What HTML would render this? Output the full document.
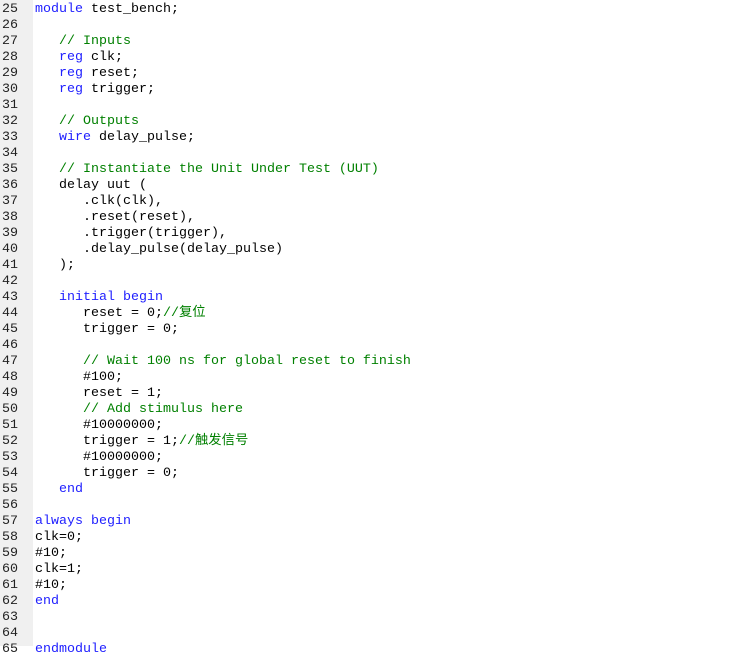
<!DOCTYPE html>
<html><head><meta charset="utf-8"><style>
html,body{margin:0;padding:0;background:#fff;width:735px;height:646px;overflow:hidden}
.g{position:absolute;left:0;top:0;width:33px;height:646px;background:#f0f0f0}
pre{position:absolute;top:2px;margin:0;font-family:"Liberation Mono","Noto Sans CJK SC",monospace;font-size:13.33px;line-height:16px;color:#000}
.n{left:2px;color:#222}
.c{left:35px}
.k{color:#2020ff}.m{color:#008000}
</style></head><body>
<div class="g"></div>
<pre class="n">25
26
27
28
29
30
31
32
33
34
35
36
37
38
39
40
41
42
43
44
45
46
47
48
49
50
51
52
53
54
55
56
57
58
59
60
61
62
63
64
65</pre>
<pre class="c"><span class="k">module</span> test_bench;

   <span class="m">// Inputs</span>
   <span class="k">reg</span> clk;
   <span class="k">reg</span> reset;
   <span class="k">reg</span> trigger;

   <span class="m">// Outputs</span>
   <span class="k">wire</span> delay_pulse;

   <span class="m">// Instantiate the Unit Under Test (UUT)</span>
   delay uut (
      .clk(clk),
      .reset(reset),
      .trigger(trigger),
      .delay_pulse(delay_pulse)
   );

   <span class="k">initial begin</span>
      reset = 0;<span class="m">//复位</span>
      trigger = 0;

      <span class="m">// Wait 100 ns for global reset to finish</span>
      #100;
      reset = 1;
      <span class="m">// Add stimulus here</span>
      #10000000;
      trigger = 1;<span class="m">//触发信号</span>
      #10000000;
      trigger = 0;
   <span class="k">end</span>

<span class="k">always begin</span>
clk=0;
#10;
clk=1;
#10;
<span class="k">end</span>


<span class="k">endmodule</span></pre>
</body></html>
